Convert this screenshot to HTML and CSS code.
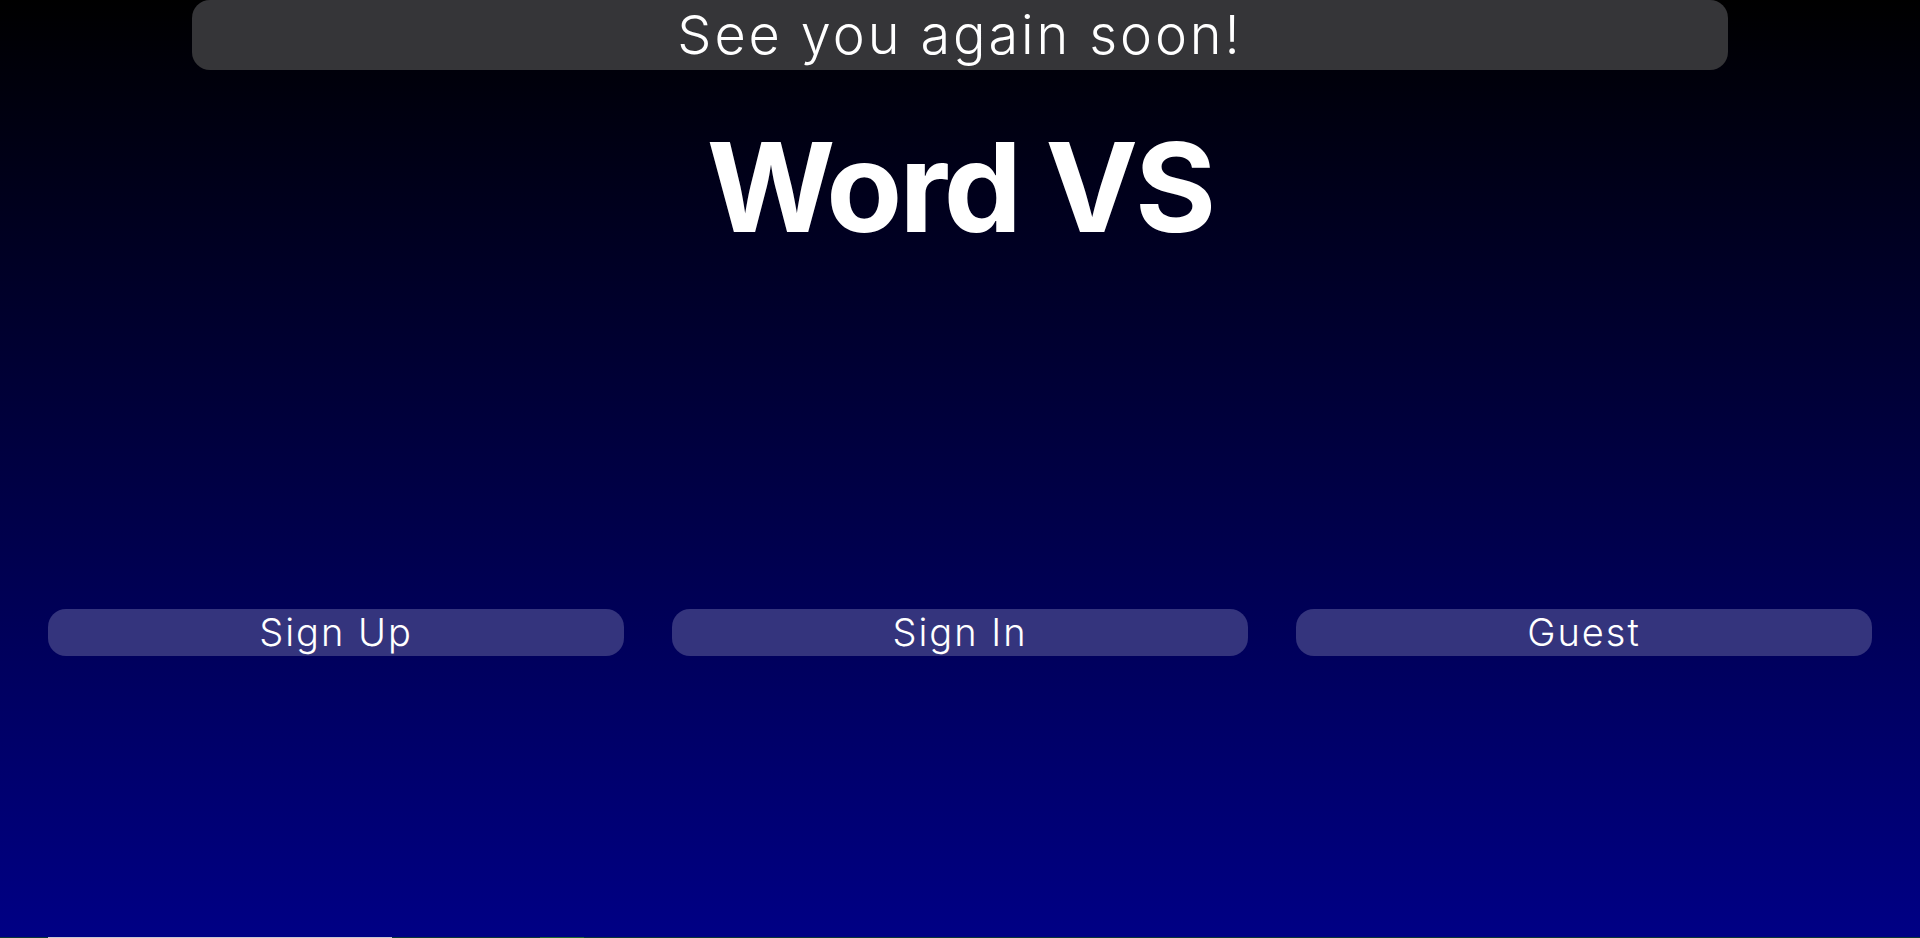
FILE: index.html
```html
<!DOCTYPE html>
<html lang="en">
<head>
<meta charset="utf-8">
<title>Word VS</title>
<link rel="stylesheet" href="styles.css">
</head>
<body>
<div class="page">
  <div class="banner">See you again soon!</div>
  <h1 class="title">Word VS</h1>
  <div class="actions">
    <button class="btn">Sign Up</button>
    <button class="btn">Sign In</button>
    <button class="btn">Guest</button>
  </div>
  <div class="below">
    <div class="below-field"></div>
    <div class="below-go"></div>
  </div>
</div>
</body>
</html>
```

FILE: styles.css
```css
html, body {
  margin: 0;
  padding: 0;
  height: 938px;
  overflow: hidden;
}
body {
  background: linear-gradient(to bottom, #000000 0%, #000085 100%);
  font-family: "Inter", "Liberation Sans", sans-serif;
  color: #ffffff;
}
.page {
  display: flex;
  flex-direction: column;
  height: 938px;
}
.banner {
  width: 1536px;
  height: 70px;
  margin: 0 auto;
  background: #353538;
  border-radius: 18px;
  font-size: 54px;
  font-weight: 300;
  line-height: 70px;
  letter-spacing: 2.9px;
  text-align: center;
}
.title {
  margin: 55px 0 0;
  font-size: 124px;
  font-weight: 700;
  line-height: 124px;
  text-align: center;
  letter-spacing: -3px;
}
.actions {
  display: grid;
  grid-template-columns: repeat(3, 1fr);
  gap: 48px;
  padding: 0 48px;
  margin-top: 360px;
}
.btn {
  height: 47px;
  border: none;
  border-radius: 18px;
  background: #34347d;
  color: #ffffff;
  font-family: "Inter", "Liberation Sans", sans-serif;
  font-size: 38px;
  font-weight: 300;
  line-height: 47px;
  letter-spacing: 2px;
  padding: 0;
}
.below {
  margin-top: auto;
  height: 1px;
  display: flex;
  background: #0c3838;
  padding-left: 48px;
}
.below-field {
  width: 344px;
  background: #c8c8d0;
}
.below-go {
  width: 44px;
  margin-left: 148px;
  background: #1f6a30;
}
```
